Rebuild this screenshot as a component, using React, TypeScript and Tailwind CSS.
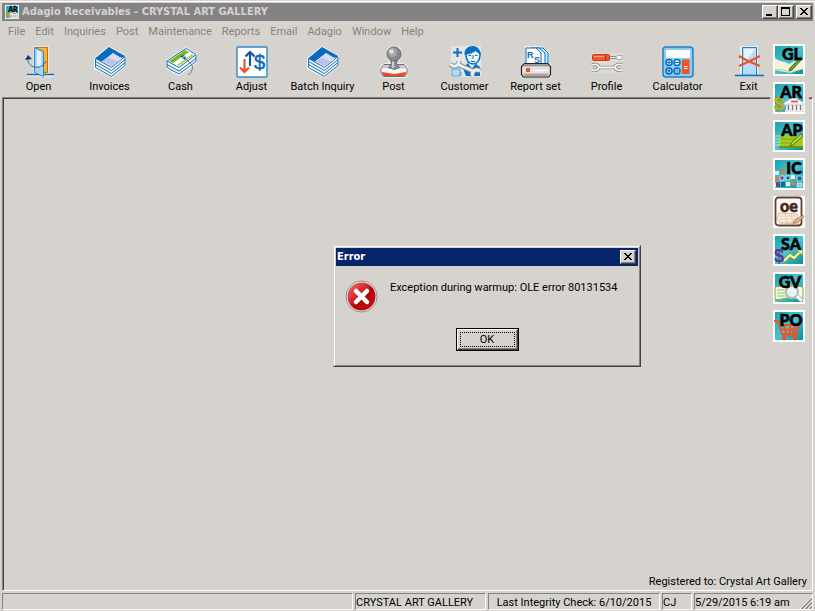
import { useState } from "react"
import type { ReactNode } from "react"

const MENUS = ["File", "Edit", "Inquiries", "Post", "Maintenance", "Reports", "Email", "Adagio", "Window", "Help"]

const raised = "border border-t-white border-l-white border-r-[#424142] border-b-[#424142] shadow-[inset_-1px_-1px_0_#848284]"
const sunken = "border border-t-[#848284] border-l-[#848284] border-r-white border-b-white"
const captionFont = "font-['DejaVu_Sans_Condensed','DejaVu_Sans',sans-serif] font-bold"

function Icon({ children }: { children: ReactNode }) {
    return (
        <svg width="32" height="32" viewBox="0 0 32 32" fill="none" aria-hidden="true">
            {children}
        </svg>
    )
}

function OpenIcon() {
    return (
        <Icon>
            <path d="M10 0h16v28h5v3H4v-3h6z" fill="#e9e7e3" />
            <path d="M4 28.500h27" stroke="#0871c6" strokeWidth="1.500" />
            <path d="M12 1.500h12.500v25H20" fill="#ffb030" stroke="#b87410" />
            <path d="M11.500 1.500l9 4v25l-9-4z" fill="#a9d3ef" stroke="#2f86c4" />
            <path d="M14 4l4 2v16l-4-3z" fill="#e2f3fc" />
            <path d="M5 13c-1 8 13 13 18 2" stroke="#1b6cae" />
            <path d="M2 14l3-5 4 4z" fill="#083c7b" />
        </Icon>
    )
}

function StackIcon() {
    return (
        <Icon>
            <path d="M15 0l17 10v10L18 32 0 23V12z" fill="#f2f5f7" />
            <path d="M1.500 21.500L17.500 30.500 31 19.500M1.500 18.500L17.500 27.500 31 16.500M1.500 15.500L17.500 24.500 31 13.500" stroke="#1670b8" />
            <path d="M1.500 12.500v9M31 11v8.500" stroke="#1670b8" />
            <path d="M15 1.500L31 10.500 17.500 21.500 1.500 12.500z" fill="#fff" stroke="#1670b8" />
            <path d="M15 1.500L31 10.500 27 12 19 7 8 15.500 1.500 12.500z" fill="#0869bd" />
            <path d="M19 7.500l9 5-10.500 8L8 15.500z" fill="#bcc4e8" />
            <path d="M19 7.500l9 5-4 3-10-4z" fill="#d9dcf3" />
        </Icon>
    )
}

function CashIcon() {
    return (
        <Icon>
            <path d="M21 1l11 7v9L14 30 1 23v-9z" fill="#f2f5f7" />
            <path d="M2 21.500L14 28 31 15.500M2 18.500L14 25 31 12.500M2 15v6.500M31 9v6.500" stroke="#1670b8" />
            <path d="M21 2.500L31 8.500 14 21.500 2 15z" fill="#fff" stroke="#1670b8" />
            <path d="M20 4l4 2L8 17 4 15z" fill="#79b928" />
            <path d="M27 8l2 1L14 20l-2-1z" fill="#a6d45c" />
            <path d="M15 10l5 4 1-4-5 3 4-4z" fill="#075ba5" />
            <path d="M20 12c4 5 9 6 7 12-1 3-2 4-4 5" stroke="#687c96" />
        </Icon>
    )
}

function AdjustIcon() {
    return (
        <Icon>
            <rect x="1" y="1" width="30" height="30" rx="1" fill="#fff" stroke="#2f8acb" strokeWidth="1.400" />
            <path d="M14 20V6M9.500 10.500L14 6l4.500 4.500" stroke="#075aa3" strokeWidth="2.200" />
            <path d="M8.500 13v13M4 21.500L8.500 26l4.500-4.500" stroke="#f05423" strokeWidth="2.200" />
            <text x="18" y="23" fontFamily="Liberation Sans" fontSize="20" fill="#0869bd" stroke="#0869bd" strokeWidth=".5">$</text>
        </Icon>
    )
}

function StampIcon() {
    return (
        <Icon>
            <path d="M16 0c11 0 8 11 4 16l8 2 2 3v8l-2 3H4l-2-3v-8l2-3 8-2C7 11 7 0 16 0z" fill="#eeedeb" />
            <path d="M6 18.500h20l3 4v5l-2 3H5l-2-3v-5z" fill="#fafafa" stroke="#6f6f70" />
            <path d="M6.500 19h19l2.500 3.500H4z" fill="#c9cacb" />
            <path d="M4 26l12 2 12-2v2l-2 2H6l-2-2z" fill="#ee4a22" />
            <path d="M12.500 13h7l-1 5 3 3.500-5 2-6-2 3-3.500z" fill="#8f9194" stroke="#66686b" />
            <path d="M14 14h2v8h-2z" fill="#cfd0d2" />
            <circle cx="16" cy="8" r="7" fill="#87898c" stroke="#66686b" />
            <circle cx="14.500" cy="6.500" r="4.500" fill="#a5a7aa" />
            <circle cx="13.500" cy="5.500" r="2.200" fill="#dfe0e1" />
        </Icon>
    )
}

function CustomerIcon() {
    return (
        <Icon>
            <path d="M2 0h30v31H2z" fill="#e2e6e6" />
            <path d="M8.500 2v9M4 6.500h9" stroke="#0871c6" strokeWidth="2" />
            <path d="M3 23h8v7H3zM12 30v-4" fill="#b5dcf3" stroke="#4fa3dc" />
            <path d="M14 22l4-4h9l4 3v9H17z" fill="#0871c6" />
            <path d="M19 18l4 5 4-5v-3h-8z" fill="#eef9ff" stroke="#0871c6" />
            <path d="M17 9c0-9 14-9 14 0 0 5-3 9-7 9s-7-4-7-9z" fill="#eef9ff" stroke="#0871c6" strokeWidth="1.500" />
            <path d="M15.500 9c-1-12 17-12 16 0-2-1-3-3-5-4-2 2-6 3-11 4z" fill="#0871c6" />
            <path d="M19.500 9.500H22m4 0h2.500M24 9v4m-2 2.500h4" stroke="#0871c6" />
            <path d="M1 18c4 4 9 2 9-3M8 18l18 8M24 30c-2-4 2-8 7-5" stroke="#8a8d91" strokeWidth="5" />
            <path d="M1 18c4 4 9 2 9-3M8 18l18 8M24 30c-2-4 2-8 7-5" stroke="#efefef" strokeWidth="3" />
        </Icon>
    )
}

function ReportIcon() {
    return (
        <Icon>
            <path d="M5 0h17l7 6v12h2v13H1V19h4z" fill="#eee" />
            <path d="M16 2h7l5 5v13H16z" fill="#c9e8f8" stroke="#0871c6" />
            <path d="M11 2h8l6 5v13H11z" fill="#edf9ff" stroke="#0871c6" />
            <path d="M6 2h10l5 5v14H6z" fill="#fff" stroke="#0871c6" />
            <text x="7" y="12" fontFamily="Liberation Sans" fontSize="9" fontWeight="bold" fill="#0869bd">R</text>
            <text x="14" y="17" fontFamily="Liberation Sans" fontSize="9" fontWeight="bold" fill="#0869bd">S</text>
            <path d="M1.500 20.500l3-3h23l3 3v8l-2 2.500h-25l-2-2.500z" fill="#e6e4e2" stroke="#242424" strokeWidth="1.200" />
            <path d="M5 18h22l2 2.500H3z" fill="#9d9a98" />
            <path d="M3 27.500h26l-1.500 2.500h-23z" fill="#aaa5a2" />
            <path d="M6 22h4v4H6z" fill="#f05423" />
            <path d="M13 24.500h14" stroke="#fff" />
        </Icon>
    )
}

function ProfileIcon() {
    return (
        <Icon>
            <path d="M1 7h31v9l-3 1 3 3-3 7H2l-2-7 3-3-2-1z" fill="#dfdcd8" />
            <rect x="1.500" y="8.500" width="17" height="6" rx="1" fill="#f05a2b" stroke="#c2401c" />
            <path d="M3 10.500h10" stroke="#ffa07c" />
            <path d="M14.500 9v5" stroke="#a82c10" />
            <path d="M19 11.500h7" stroke="#8f8f90" strokeWidth="3" />
            <path d="M19 11.500h7" stroke="#eee" />
            <path d="M25 10.500l2-1h4v4h-4l-2-1z" fill="#f5f5f5" stroke="#9a9a9a" strokeWidth=".8" />
            <path d="M1 19c9-3 9 7 0 5M7 21.500h18M31 19c-9-3-9 7 0 5" stroke="#8a8c8f" strokeWidth="3.600" />
            <path d="M1 19c9-3 9 7 0 5M7 21.500h18M31 19c-9-3-9 7 0 5" stroke="#f3f3f3" strokeWidth="1.800" />
        </Icon>
    )
}

function CalculatorIcon() {
    return (
        <Icon>
            <rect x="1" y="1" width="30" height="30" rx="3" fill="#8accf2" stroke="#2581c3" strokeWidth="1.500" />
            <rect x="4" y="4" width="24" height="8" fill="#fff" />
            <path d="M20 13.500h7.500V28H20z" fill="#f05423" />
            <path d="M22 20.500h3.500m-3.500 2h3.500" stroke="#fff" />
            <g fill="#fff" stroke="#0869bd" strokeWidth="1.500">
                <circle cx="7" cy="16.500" r="3" />
                <circle cx="15" cy="16.500" r="3" />
                <circle cx="7" cy="25" r="3" />
                <circle cx="15" cy="25" r="3" />
            </g>
            <path d="M5 16.500h4M7 14.500v4M13 16.500h4M5.500 23.500l3 3m0-3l-3 3M13 25h4M15 23v1m0 2v1" stroke="#0869bd" strokeWidth="1.200" />
        </Icon>
    )
}

function ExitIcon() {
    return (
        <Icon>
            <path d="M7 0h18v28H7z" fill="#e8eef1" />
            <path d="M2 29.500h29" stroke="#0871c6" strokeWidth="1.500" />
            <path d="M9.500 1.500h14V29h-14z" fill="#b9dcf5" stroke="#2581c3" />
            <path d="M11 3h11L11 18z" fill="#e4f4fd" />
            <path d="M6 10l9 5 12 5M27 10l-10 5-11 5" stroke="#f05423" strokeWidth="2.200" />
        </Icon>
    )
}

const TOOLS = [
    { label: "Open", icon: <OpenIcon /> },
    { label: "Invoices", icon: <StackIcon /> },
    { label: "Cash", icon: <CashIcon /> },
    { label: "Adjust", icon: <AdjustIcon /> },
    { label: "Batch Inquiry", icon: <StackIcon /> },
    { label: "Post", icon: <StampIcon /> },
    { label: "Customer", icon: <CustomerIcon /> },
    { label: "Report set", icon: <ReportIcon /> },
    { label: "Profile", icon: <ProfileIcon /> },
    { label: "Calculator", icon: <CalculatorIcon /> },
    { label: "Exit", icon: <ExitIcon /> },
]

// Background drawings of the module tiles, the letters go on top (x is their centre)
const MODULES: { code: string; x: number; art: ReactNode }[] = [
    {
        code: "GL",
        x: 19,
        art: (
            <>
                <path d="M2 14c5 4 9 3 14 6 5-3 9-4 14-4v9l-13 4L2 26z" fill="#f5f4d5" />
                <path d="M2 26c6-1 11 0 15 3 4-2 8-3 13-4" stroke="#c9c78e" />
                <path d="M16 27l1-3 10-10 2 1-10 11z" fill="#68a52e" stroke="#27521a" strokeWidth=".8" />
            </>
        ),
    },
    {
        code: "AR",
        x: 18,
        art: (
            <>
                <path d="M11 21l10-6 10 6v2H11zM13 22h17v7H13z" fill="#fff" stroke="#b9bfc4" strokeWidth=".6" />
                <path d="M15.500 23v5m4-5v5m4-5v5m4-5v5" stroke="#8f6f78" strokeWidth="1.500" />
                <path d="M18 19.500h7" stroke="#df5f4c" strokeWidth="2" />
                <path d="M12 29h19" stroke="#dfe5e8" strokeWidth="2" />
                <text x="1" y="28" fontFamily="Liberation Sans" fontSize="18" fontWeight="bold" fill="#d2b914" stroke="#8e7b08" strokeWidth=".4">$</text>
            </>
        ),
    },
    {
        code: "AP",
        x: 19,
        art: (
            <>
                <path d="M6 15h24v12H6z" fill="#a3cc22" />
                <path d="M6 26h24v2H6z" fill="#659817" />
                <path d="M8 19h17M8 23h14" stroke="#7aa81c" />
                <path d="M1 16h6M1 19h6M1 22h6M1 25h6" stroke="#b8e8e8" />
                <path d="M17 26l2-4 9-8 2 2-10 9z" fill="#b9d244" stroke="#3f5c12" strokeWidth=".8" />
            </>
        ),
    },
    {
        code: "IC",
        x: 21,
        art: (
            <>
                <path d="M2 13h4v4H2zM18 17h4v4h-4zM2 25h4v4H2zM13 24h4v4h-4z" fill="#e2eff0" />
                <path d="M8 11h4v5H8zM2 19h4v4H2zM18 23h4v4h-4z" fill="#d87e43" />
                <path d="M7 18h4v4H7zM3 24h4v5H3z" fill="#713f91" />
                <path d="M13 18h4v4h-4zM24 18h5v5h-5zM8 24h4v5H8z" fill="#086f9d" />
                <path d="M24 25h5v4h-5z" fill="#8bcbd0" />
                <path d="M13 18h4v4h-4zM24 18h5v5h-5zM24 25h5v4h-5zM7 18h4v4H7z" stroke="#dff5f5" strokeWidth=".8" />
            </>
        ),
    },
    {
        code: "oe",
        x: 16,
        art: (
            <>
                <rect x="2.500" y="1.500" width="26" height="28" rx="3" fill="#fffaf5" stroke="#5d4033" strokeWidth="1.800" />
                <path d="M6 17l18 1 2 9-18 1-4-5z" fill="#fbeee2" stroke="#c89f83" strokeWidth=".7" />
                <path d="M7 20h16M6 23h18M7 26h17M12 17l2 10M18 18l2 9" stroke="#ddbda5" strokeWidth=".7" />
                <path d="M20 27l2-3 8-5 1 2-8 6z" fill="#e6b98d" stroke="#997158" strokeWidth=".8" />
            </>
        ),
    },
    {
        code: "SA",
        x: 18,
        art: (
            <>
                <path d="M11 27l6-6 4 3 7-7" stroke="#8d9c28" strokeWidth="3.500" />
                <path d="M11 27l6-6 4 3 7-7" stroke="#ffffa8" strokeWidth="2" />
                <path d="M24 16l6-1-1 6z" fill="#ffffa8" stroke="#8d9c28" strokeWidth=".7" />
                <text x="1" y="28" fontFamily="Liberation Sans" fontSize="18" fontWeight="bold" fill="#653290">$</text>
            </>
        ),
    },
    {
        code: "GV",
        x: 17,
        art: (
            <>
                <path d="M2 15l13-2 15 2v13l-14-2-14 2z" fill="#f4fae9" stroke="#86a638" />
                <path d="M4 18h9M4 21h9M4 24h9M25 26h4M14 14v12" stroke="#9bc358" />
                <circle cx="19" cy="20" r="6" fill="#eaf4f2" stroke="#b3bcb9" strokeWidth="2" />
                <path d="M24 24l5 5" stroke="#a9b2ae" strokeWidth="4" />
                <path d="M24 24l5 5" stroke="#fff" strokeWidth="2.500" />
            </>
        ),
    },
    {
        code: "PO",
        x: 18,
        art: (
            <>
                <path d="M1 11h4l4 13h14l3-9H7M8 19.500h17M11 15l2 9M17 15v9M22 15l-2 9" stroke="#f4511e" strokeWidth="1.800" />
                <path d="M9 26h15" stroke="#f4511e" strokeWidth="1.500" />
                <circle cx="11" cy="28.500" r="2" fill="#f4511e" />
                <circle cx="22" cy="28.500" r="2" fill="#f4511e" />
            </>
        ),
    },
]

function ModuleIcon({ code, x, art, size = 32 }: { code: string; x: number; art: ReactNode; size?: number }) {
    const brown = code === "oe"
    const ink = brown ? "#45281c" : "#000"
    return (
        <svg width={size} height={size} viewBox="0 0 32 32" fill="none" aria-hidden="true">
            <defs>
                <linearGradient id={"tile" + code} x1="0" y1="0" x2="1" y2="1">
                    <stop offset="0" stopColor="#1d9fae" />
                    <stop offset=".5" stopColor="#49c5cf" />
                    <stop offset="1" stopColor="#078c9b" />
                </linearGradient>
            </defs>
            <path d="M0 0h32v32H0z" fill="#fff" />
            {!brown && <path d="M2 2h28v28H2z" fill={"url(#tile" + code + ")"} />}
            {art}
            <text x={x} y="16" textAnchor="middle" fontFamily="Lato, sans-serif" fontSize="16" fontWeight="900" fill={ink} stroke={ink} strokeWidth=".6">
                {code}
            </text>
        </svg>
    )
}

function CaptionButton({ label, onClick, children }: { label: string; onClick?: () => void; children: ReactNode }) {
    return (
        <button type="button" aria-label={label} onClick={onClick} className={`flex h-[14px] w-4 items-center justify-center bg-[#d6d3ce] ${raised}`}>
            <svg width="12" height="10" viewBox="0 0 12 10" fill="none" stroke="#000" shapeRendering="crispEdges" aria-hidden="true">
                {children}
            </svg>
        </button>
    )
}

function CloseGlyph() {
    return <path d="M2 1h2v1h1v1h2V2h1V1h2v1H9v1H8v1H7v1h1v1h1v1h1v1H8V7H7V6H5v1H4v1H2V7h1V6h1V5h1V4H4V3H3V2H2z" fill="#000" stroke="none" />
}

function ErrorDialog({ onClose }: { onClose: () => void }) {
    return (
        <div role="alertdialog" aria-labelledby="error-title" aria-describedby="error-text"
            className="absolute top-[244px] left-[333px] w-[308px] border border-t-[#d6d3ce] border-l-[#d6d3ce] border-r-[#424142] border-b-[#424142] bg-[#d6d3ce]"
        >
            <div className="border border-t-white border-l-white border-r-[#848284] border-b-[#848284] p-px">
                <div className="flex h-[18px] items-center justify-between bg-[#08246b] pr-[2px] pl-px">
                    <h2 id="error-title" className={`text-white ${captionFont}`}>Error</h2>
                    <CaptionButton label="Close" onClick={onClose}><CloseGlyph /></CaptionButton>
                </div>
                <div className="flex gap-3 px-[9px] pt-[14px] whitespace-nowrap">
                    <svg width="33" height="33" viewBox="0 0 33 33" fill="none" aria-hidden="true">
                        <defs>
                            <linearGradient id="errorRed" x1="0" y1="0" x2="1" y2="1">
                                <stop offset="0" stopColor="#e77a78" />
                                <stop offset=".45" stopColor="#cc1f24" />
                                <stop offset=".55" stopColor="#b40008" />
                                <stop offset="1" stopColor="#c8191c" />
                            </linearGradient>
                        </defs>
                        <circle cx="16.500" cy="16.500" r="15.500" fill="#f4f2f1" stroke="#8b8b8b" />
                        <circle cx="16.500" cy="16.500" r="14" fill="url(#errorRed)" />
                        <path d="M11 11l11 11m0-11L11 22" stroke="#fff" strokeWidth="4.500" strokeLinecap="round" />
                    </svg>
                    <p id="error-text">Exception during warmup: OLE error 80131534</p>
                </div>
                <div className="flex justify-center pt-[15px] pb-[13px]">
                    <button type="button" onClick={onClose} className="h-[23px] w-[63px] border border-black">
                        <span className={`flex h-full p-[2px] ${raised}`}>
                            <span className="flex flex-1 items-center justify-center border border-dotted border-black">OK</span>
                        </span>
                    </button>
                </div>
            </div>
        </div>
    )
}

export default function App() {
    const [showError, setShowError] = useState(true)

    return (
        <div className="relative flex min-h-screen flex-col border-t border-[#d6d3ce] bg-[#d6d3ce] font-['Roboto',sans-serif] text-[11px] leading-4 text-black">
            <header className="border-t border-white px-[2px] pt-px">
                <div className="flex h-[18px] items-center bg-[#848284] pr-px pl-[3px]">
                    <ModuleIcon {...MODULES[1]} size={14} />
                    <h1 className={`ml-[3px] flex-1 text-[#d6d3ce] ${captionFont}`}>Adagio Receivables - CRYSTAL ART GALLERY</h1>
                    <div className="flex">
                        <CaptionButton label="Minimize"><path d="M2 7h6v2H2z" fill="#000" stroke="none" /></CaptionButton>
                        <CaptionButton label="Maximize"><path d="M1.500 .5h8v8h-8zM1 1.500h9" /></CaptionButton>
                    </div>
                    <div className="ml-[2px] flex">
                        <CaptionButton label="Close"><CloseGlyph /></CaptionButton>
                    </div>
                </div>
                <nav className="flex h-[22px] items-center gap-[10px] pl-[6px] text-[#848284]">
                    {MENUS.map(m => (
                        <button key={m} type="button">{m}</button>
                    ))}
                </nav>
                <div className="flex h-[54px] pt-[3px] pl-px">
                    {TOOLS.map(t => (
                        <button key={t.label} type="button" className="flex w-[71px] flex-col items-center gap-px whitespace-nowrap">
                            {t.icon}
                            {t.label}
                        </button>
                    ))}
                </div>
            </header>

            <main className={`mx-[2px] flex flex-1 ${sunken}`}>
                <div className="flex flex-1 items-end justify-end border-t border-l border-[#424142] px-[5px]">
                    <p>Registered to: Crystal Art Gallery</p>
                </div>
            </main>

            <footer className="flex gap-[2px] px-[2px] pt-[2px] pb-px leading-[18px]">
                <div className={`h-[17px] flex-1 ${sunken}`}></div>
                <div className={`h-[17px] w-[131px] ${sunken}`}>CRYSTAL ART GALLERY</div>
                <div className={`h-[17px] w-[172px] text-center ${sunken}`}>Last Integrity Check: 6/10/2015</div>
                <div className={`h-[17px] w-[30px] ${sunken}`}>CJ</div>
                <div className={`flex h-[17px] w-[119px] justify-between ${sunken}`}>
                    5/29/2015 6:19 am
                    <svg width="12" height="12" viewBox="0 0 12 12" className="self-end" aria-hidden="true">
                        <path d="M0 12L12 0M4 12l8-8M8 12l4-4" stroke="#fff" />
                        <path d="M1.500 12L12 1.500M5.500 12L12 5.500M9.500 12L12 9.500" stroke="#848284" strokeWidth="1.500" />
                    </svg>
                </div>
            </footer>

            {/* Module launcher, floats over the toolbar and the work area */}
            <aside className="absolute top-[43px] right-[6px] flex flex-col gap-[6px] bg-[#d6d3ce] pr-1 pl-[3px]">
                {MODULES.map(m => (
                    <button key={m.code} type="button" aria-label={m.code}>
                        <ModuleIcon {...m} />
                    </button>
                ))}
            </aside>

            {showError && <ErrorDialog onClose={() => setShowError(false)} />}
        </div>
    )
}
